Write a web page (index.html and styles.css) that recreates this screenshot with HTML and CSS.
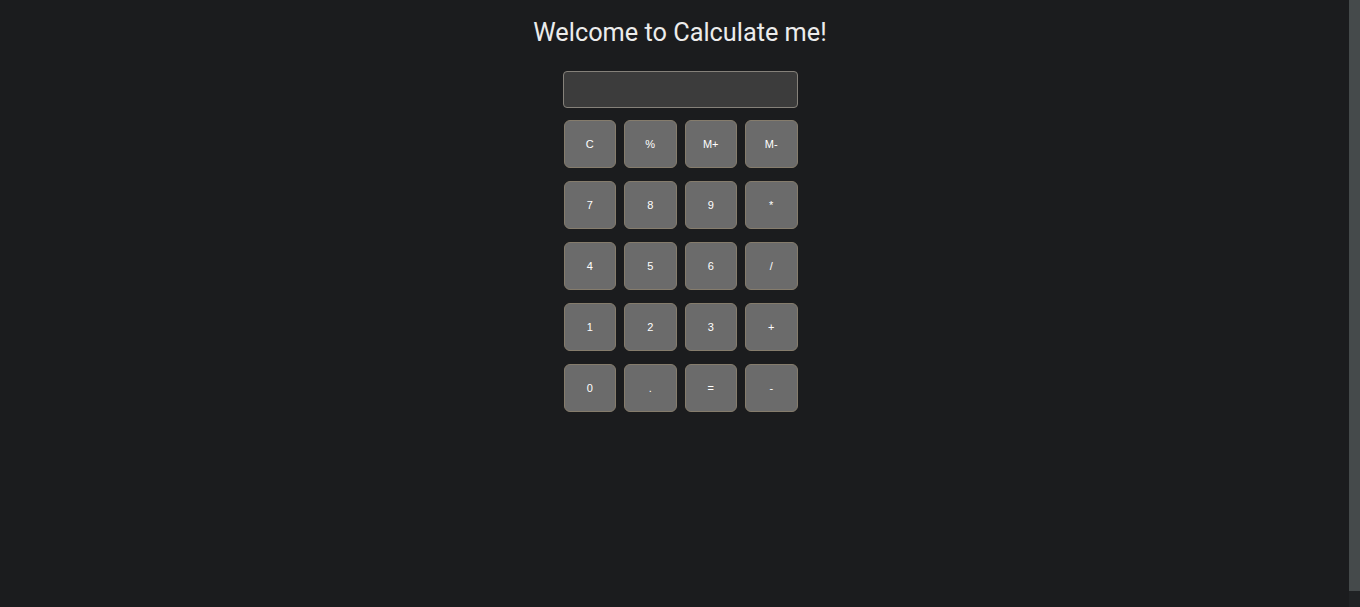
FILE: index.html
```html
<!DOCTYPE html>
<html lang="en">
<head>
<meta charset="utf-8">
<title>Calculate me</title>
<link rel="stylesheet" href="styles.css">
</head>
<body>
<main class="page">
  <h1 class="title">Welcome to Calculate me!</h1>
  <div class="calc">
    <input class="display" type="text" aria-label="display">
    <div class="keys">
      <button class="key">C</button>
      <button class="key">%</button>
      <button class="key">M+</button>
      <button class="key">M-</button>
      <button class="key">7</button>
      <button class="key">8</button>
      <button class="key">9</button>
      <button class="key">*</button>
      <button class="key">4</button>
      <button class="key">5</button>
      <button class="key">6</button>
      <button class="key">/</button>
      <button class="key">1</button>
      <button class="key">2</button>
      <button class="key">3</button>
      <button class="key">+</button>
      <button class="key">0</button>
      <button class="key">.</button>
      <button class="key">=</button>
      <button class="key">-</button>
    </div>
  </div>
</main>
<div class="scrollbar" aria-hidden="true"><div class="thumb"></div></div>
</body>
</html>
```

FILE: styles.css
```css
html {
  background: #1b1c1e;
}
body {
  margin: 0;
  background: #1b1c1e;
  font-family: Roboto, "Liberation Sans", sans-serif;
}
.page {
  display: flex;
  flex-direction: column;
  align-items: center;
}
.title {
  margin: 16px 0 0;
  font-size: 25.3px;
  font-weight: 400;
  line-height: 34px;
  color: #ececec;
}
.calc {
  margin-top: 21px;
  width: 235px;
  display: flex;
  flex-direction: column;
  align-items: stretch;
}
.display {
  box-sizing: border-box;
  height: 37px;
  width: 235px;
  margin: 0;
  background: #3c3c3c;
  border: 1px solid #85817a;
  border-radius: 4px;
  outline: none;
}
.keys {
  margin: 12px 0 0 1px;
  display: grid;
  grid-template-columns: repeat(4, 52.5px);
  column-gap: 8px;
  row-gap: 13px;
}
.key {
  box-sizing: border-box;
  height: 48px;
  margin: 0;
  padding: 0;
  background: #6b6b6b;
  border: 1px solid #857c6c;
  border-radius: 6px;
  color: #ffffff;
  font-family: "Liberation Sans", Arial, sans-serif;
  font-size: 11px;
}
.scrollbar {
  position: fixed;
  top: 0;
  right: 0;
  width: 11px;
  height: 100%;
  background: #202224;
}
.thumb {
  height: 591px;
  background: #454a4b;
}
```
